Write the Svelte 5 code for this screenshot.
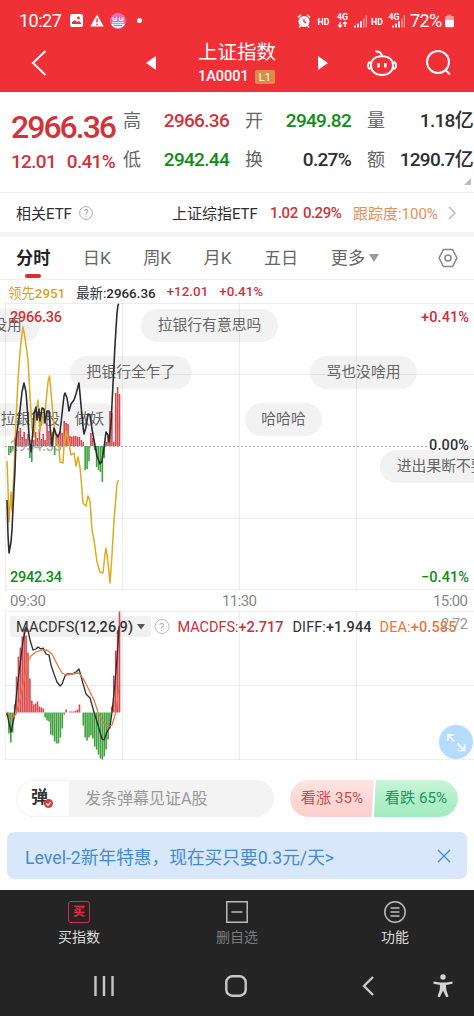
<script lang="ts">
	type Point = [number, number];

	const quotes = [
		{ label: '高', value: '2966.36', tone: 'up' },
		{ label: '开', value: '2949.82', tone: 'down' },
		{ label: '量', value: '1.18亿', tone: '' },
		{ label: '低', value: '2942.44', tone: 'down' },
		{ label: '换', value: '0.27%', tone: '' },
		{ label: '额', value: '1290.7亿', tone: '' }
	];

	const tabs = ['分时', '日K', '周K', '月K', '五日'];
	let activeTab = $state('分时');
	let showPromo = $state(true);

	// Floating comments behind the curves, x/y of the pill's corner inside the chart
	const comments = [
		{ text: '没用', x: -26, y: 6, w: 66 },
		{ text: '拉银行有意思吗', x: 141, y: 6, w: 137 },
		{ text: '把银行全乍了', x: 70, y: 53, w: 122 },
		{ text: '骂也没啥用', x: 310, y: 53, w: 107 },
		{ text: '拉銀行股　做妖', x: -16, y: 100, w: 137 },
		{ text: '哈哈哈', x: 245, y: 100, w: 77 },
		{ text: '进出果断不要犹豫', x: 380, y: 147, w: 152 }
	];

	const price: Point[] = [
		[7, 500], [8, 535], [9, 553], [11, 542], [12, 530], [13, 508], [15, 470], [16, 440], [18, 425],
		[20, 410], [22, 392], [24, 383], [26, 392], [28, 418], [29, 436], [31, 452], [33, 430], [34, 414],
		[36, 407], [37, 420], [39, 409], [40, 421], [42, 408], [44, 409], [45, 423], [47, 411], [49, 411],
		[50, 426], [52, 446], [54, 428], [56, 434], [58, 437], [60, 432], [62, 414], [64, 396], [65, 393],
		[67, 398], [69, 411], [71, 404], [74, 400], [76, 394], [79, 383], [81, 405], [83, 427], [84, 434],
		[86, 427], [88, 414], [90, 415], [92, 429], [94, 440], [97, 456], [100, 464], [102, 461], [104, 448],
		[106, 432], [108, 435], [109, 442], [111, 424], [113, 384], [115, 345], [117, 313], [118, 305], [119, 304]
	];
	const lead: Point[] = [
		[7, 461], [8, 488], [9, 522], [11, 492], [12, 511], [14, 470], [16, 420], [18, 380], [20, 352],
		[22, 333], [23, 327], [25, 338], [28, 360], [30, 396], [32, 428], [34, 437], [36, 412], [38, 400],
		[40, 431], [42, 413], [44, 423], [46, 402], [48, 382], [49.5, 376], [51, 392], [53, 415], [56, 442],
		[59, 447], [60, 462], [63, 463], [64, 445], [66, 431], [69, 444], [71, 455], [74, 453], [76, 466],
		[78, 457], [80, 467], [82, 490], [83, 503], [86, 506], [88, 496], [90, 501], [92, 530], [94, 540],
		[97, 562], [100, 572], [103, 573], [105, 554], [106, 548], [108, 562], [110, 583], [112, 555],
		[114, 520], [117, 484], [118, 481], [119, 481]
	];
	const diff: Point[] = [
		[7, 713], [9, 723], [11, 732], [14, 718], [17, 690], [20, 665], [23, 641], [26, 627], [28, 630],
		[30, 640], [33, 650], [36, 649], [38, 647], [41, 649], [43, 648], [46, 654], [49, 655], [51, 665],
		[54, 674], [57, 682], [60, 686], [62, 684], [65, 676], [67, 674], [72, 674], [76, 672], [79, 669],
		[82, 680], [86, 694], [90, 698], [94, 712], [98, 725], [102, 739], [104, 740], [107, 732],
		[110, 727], [112, 712], [115, 683], [118, 645], [119, 626]
	];
	const dea: Point[] = [
		[7, 712], [12, 718], [16, 714], [20, 700], [24, 680], [28, 661], [31, 656], [36, 652], [42, 650],
		[47, 650], [52, 654], [57, 664], [62, 673], [66, 675], [72, 674], [79, 673], [84, 680], [89, 690],
		[94, 700], [98, 712], [103, 722], [108, 727], [112, 725], [116, 712], [119, 685]
	];

	const force = [
		0, -9, -7, -3, 8, 10, 15, 18, 9, 14, 7, 12, -12, -16, 6, 14, 8, 17, 7, 12, 6, 23, 15, 8, 14, -9, 12, 9, 15, 13,
		25, 23, 22, 10, 9, 10, 10, 9, 9, 6, 4, -24, -23, -15, 13, 8, -4, -21, -24, -26, -36, -12, 4, 10, 35, 33, 4, 53, 59, 52
	];
	const macd = [
		-3, -21, -30, -20, 8, 36, 56, 65, 76, 84, 77, 60, 34, 12, 8, 9, 11, 6, 5, 4, -5, -8, -9, -22, -23, -29, -31, -31, -25, -16,
		-2, 3, 0, 1, 1, 1, 2, 3, 8, 0, -13, -25, -28, -25, -23, -26, -34, -37, -42, -46, -47, -44, -37, -27, -16, 6, 37, 62, 79, 101
	];

	const ZERO = 446;
	const MACD_ZERO = 712.5;
	const barX = (i: number) => 6.2 + i * 1.907;
	const line = (pts: Point[]) => pts.map((p) => p.join(',')).join(' ');
</script>

{#snippet bars(values: number[], zero: number)}
	{#each values as v, i (i)}
		<rect x={barX(i)} y={v > 0 ? zero - v : zero} width="1.6" height={Math.abs(v)} fill={v > 0 ? '#d9474d' : '#3fa33f'} />
	{/each}
{/snippet}

<div class="phone">
	<header>
		<div class="status">
			<span class="clock">10:27</span>
			<svg class="st-pic" viewBox="0 0 13 13"><rect width="13" height="13" rx="2" fill="#fff" /><path d="M2 10V8l3-2 2 2 2-1 2 2v1z" fill="#f03037" /><circle cx="8.5" cy="4" r="1.4" fill="#f03037" /></svg>
			<svg class="st-warn" viewBox="0 0 14 13"><path d="M7 .5 13.7 12.5H.3z" fill="#fff" /><path d="M7 4.5v4M7 9.7v1.6" stroke="#f03037" stroke-width="1.4" /></svg>
			<svg class="st-app" viewBox="0 0 16 16"><circle cx="8" cy="8" r="8" fill="#ef6bad" /><path d="M1 11h14a8 8 0 0 1-14 0z" fill="#fff" /><path d="M3 4v3.500h3.500V4M9.500 4v3.500H13V4M5 5v2M11.500 5v2M2 9.700h12" fill="none" stroke="#fff" stroke-width="1" /><path d="M4 12.5h8" stroke="#58a9dc" stroke-width="1.5" /></svg>
			<i class="st-dot"></i>
			<svg class="st-right" viewBox="0 0 112 16">
				<circle cx="7" cy="8.5" r="5.500" fill="#fff" />
				<path d="M7 5.5v3.400l2.200 1" fill="none" stroke="#f03037" stroke-width="1.200" />
				<path d="M1 4.500l3-2.700M13 4.500l-3-2.700M3.500 12.500 2 14.500M10.500 12.500 12 14.500" stroke="#fff" stroke-width="1.400" />
				<g class="st-label"><text x="20.500" y="11.500">HD</text><text x="74" y="11.500">HD</text><text x="40" y="7">4G</text><text x="91.500" y="7">4G</text></g>
				<path d="M43 9v5m-2-2 2 2 2-2M48 14V9m-2 2 2-2 2 2" fill="none" stroke="#fff" stroke-width="1.3" />
				<path d="M58 14.5v-2M61 14.5v-4M64 14.5V8M96 14.5v-2M99 14.5v-4M102 14.5V8" stroke="#fff" stroke-width="1.8" />
				<path d="M67 14.5v-9M69.300 14.5v-12M105 14.5v-9M107.300 14.5v-12" stroke="#fba3a6" stroke-width="1.200" />
			</svg>
			<span class="percent">72%</span>
			<svg class="battery" viewBox="0 0 10 14"><path d="M3 0h4v1.5h1.5Q10 1.5 10 3v2.5H0V3q0-1.500 1.500-1.500H3z" fill="#f99a9d" /><path d="M0 5.500h10v7q0 1.500-1.500 1.500h-7Q0 14 0 12.500z" fill="#fff" /></svg>
		</div>
		<div class="nav">
			<svg class="back" viewBox="0 0 16 26"><path d="M14.500 1 2 13l12.500 12" /></svg>
			<svg class="prev" viewBox="0 0 10 14"><path d="M10 0v14L0 7z" fill="#fff" /></svg>
			<div class="title">
				<h1>上证指数</h1>
				<p>1A0001 <b>L1</b></p>
			</div>
			<svg class="next" viewBox="0 0 10 14"><path d="M0 0v14l10-7z" fill="#fff" /></svg>
			<svg class="robot" viewBox="0 0 30 27"><path d="M8.500 1.500q5.500-.5 6.500 4.500M15 6.200c7 0 11 3.800 11 9.200s-4 9.600-11 9.600-11-4.200-11-9.600 4-9.200 11-9.200zM3.500 12Q1 12.500 1 15.500T3.500 19M26.500 12q2.500.5 2.500 3.500T26.500 19" /><path d="M11.600 13v4.500M18.400 13v4.500" stroke-width="2.500" /></svg>
			<svg class="search" viewBox="0 0 26 26"><circle cx="12" cy="12" r="11" /><path d="m19.500 20 4.500 4.500" /></svg>
		</div>
	</header>

	<section class="quote">
		<div class="last up">
			<strong>2966.36</strong>
			<p><span>12.01</span><span>0.41%</span></p>
		</div>
		<dl>
			{#each quotes as q (q.label)}
				<dt>{q.label}</dt>
				<dd class={q.tone}>{q.value}</dd>
			{/each}
		</dl>
		<i class="corner"></i>
	</section>

	<section class="etf">
		<span>相关ETF</span>
		<svg class="help" viewBox="0 0 14 14"><circle cx="7" cy="7" r="6.400" /><text x="7" y="10.500">?</text></svg>
		<span class="etf-name">上证综指ETF</span>
		<span class="etf-num up">1.02</span>
		<span class="etf-pct up">0.29%</span>
		<span class="track">跟踪度:100%</span>
		<svg class="more" viewBox="0 0 8 14"><path d="m1 1 6 6-6 6" /></svg>
	</section>

	<nav class="tabs">
		{#each tabs as tab (tab)}
			<button class:active={tab === activeTab} onclick={() => (activeTab = tab)}>{tab}</button>
		{/each}
		<button>更多 <i class="caret"></i></button>
		<svg class="gear" viewBox="0 0 20 20"><path d="M5.500 1.500h9L19 10l-4.500 8.500h-9L1 10z" /><circle cx="10" cy="10" r="3" /></svg>
	</nav>

	<div class="summary">
		<span class="gold">领先<b>2951</b></span>
		<span>最新:<b>2966.36</b></span>
		<b class="up">+12.01</b>
		<b class="up">+0.41%</b>
	</div>

	<section class="chart">
		{#each comments as c (c.text)}
			<span class="comment" style:left="{c.x}px" style:top="{c.y}px" style:width="{c.w}px">{c.text}</span>
		{/each}
		<svg class="plot" viewBox="0 303 474 457">
			<!-- Grid -->
			<g stroke="#000" stroke-opacity="0.070">
				{#each [303.5, 374.5, 518.5, 589.5, 611.5, 685.5, 759.5] as y (y)}
					<line x1="5" y1={y} x2="474" y2={y} />
				{/each}
				{#each [5.5, 122.5, 239.5, 356.5] as x (x)}
					<line x1={x} y1="303" x2={x} y2="590" />
					<line x1={x} y1="611" x2={x} y2="760" />
				{/each}
			</g>
			<line x1="5" y1="446.5" x2="428" y2="446.5" stroke="#aaa" stroke-dasharray="2 2" />
			<line x1="470" y1="446.5" x2="474" y2="446.5" stroke="#aaa" stroke-dasharray="2 2" />

			{@render bars(force, ZERO)}
			<text class="num" x="10" y="451" textLength="52" fill="#999" fill-opacity="0.800">2954.35</text>
			<polyline points={line(lead)} fill="none" stroke="#e0aa20" stroke-width="1.500" stroke-linejoin="round" />
			<polyline points={line(price)} fill="none" stroke="#2b2d31" stroke-width="1.600" stroke-linejoin="round" />

			<!-- Scale labels -->
			<text class="num" x="10" y="322" textLength="52" fill="#d0333b">2966.36</text>
			<text class="num" x="10" y="582" textLength="52" fill="#128c16">2942.34</text>
			<text class="num" x="421" y="322" textLength="48" fill="#c9323b">+0.41%</text>
			<text class="num" x="429" y="450" textLength="40" fill="#333">0.00%</text>
			<text class="num" x="421" y="582" textLength="48" fill="#128c16">−0.41%</text>
			<g class="time">
				<text x="10" y="606" textLength="36">09:30</text>
				<text x="222" y="606" textLength="35">11:30</text>
				<text x="433" y="606" textLength="35">15:00</text>
			</g>

			<!-- MACD pane -->
			<rect x="10" y="616" width="141" height="21" rx="2" fill="#f1f1f1" />
			{@render bars(macd, MACD_ZERO)}
			<polyline points={line(diff)} fill="none" stroke="#2b2d31" stroke-width="1.300" stroke-linejoin="round" />
			<polyline points={line(dea)} fill="none" stroke="#e8763a" stroke-width="1.300" stroke-linejoin="round" />
			<g class="ind">
				<text x="16" y="632" textLength="117" fill="#333">MACDFS<tspan class="b">(12,26,9)</tspan></text>
				<path d="M137 624h8l-4 5.500z" fill="#555" />
				<circle cx="162" cy="626.500" r="7" fill="none" stroke="#bbb" />
				<text x="159" y="631" class="q">?</text>
				<text x="177.500" y="632" textLength="106" fill="#c9323b">MACDFS:<tspan class="b">+2.717</tspan></text>
				<text x="292.500" y="632" textLength="79" fill="#333">DIFF:<tspan class="b">+1.944</tspan></text>
				<text x="379.500" y="632" textLength="77" fill="#e8763a">DEA:<tspan class="b">+0.585</tspan></text>
				<text x="441" y="629" textLength="27" fill="#999">2.72</text>
			</g>
		</svg>
		<svg class="expand" viewBox="0 0 34 34"><circle cx="17" cy="17" r="17" fill="#b5dcfa" /><path d="m15.500 16.500-6-6M9 16V10h6M18.500 18.500l6.500 6.500M19 25.500h6.500V19" fill="none" stroke="#fff" stroke-width="1.600" /></svg>
	</section>

	<section class="bullet">
		<div class="input">
			<div class="dan">弹<svg viewBox="0 0 10 10"><circle cx="5" cy="5" r="5" fill="#dc3b3b" /><path d="m2.500 5 2 2 3-3.500" fill="none" stroke="#fff" stroke-width="1.300" /></svg></div>
			<span>发条弹幕见证A股</span>
		</div>
		<div class="vote">
			<span class="bull">看涨 35%</span>
			<span class="bear">看跌 65%</span>
		</div>
	</section>

	{#if showPromo}
		<section class="promo">
			<span>Level-2新年特惠，现在买只要0.3元/天&gt;</span>
			<button aria-label="关闭" onclick={() => (showPromo = false)}>
				<svg viewBox="0 0 14 14"><path d="m1 1 12 12M13 1 1 13" /></svg>
			</button>
		</section>
	{/if}

	<footer>
		<div class="actions">
			<div>
				<span class="buy">买</span>
				买指数
			</div>
			<div class="dim">
				<svg viewBox="0 0 22 22"><path d="M.8.8h20.400v20.400H.8zM5.500 11h11" /></svg>
				删自选
			</div>
			<div>
				<svg viewBox="0 0 22 22"><circle cx="11" cy="11" r="10.200" /><path d="M6.500 7h9M6.500 11h9M6.500 15h9" /></svg>
				功能
			</div>
		</div>
		<div class="system">
			<svg class="recent" viewBox="0 0 20 20"><path d="M1.500 0v20M10 0v20M18.500 0v20" /></svg>
			<svg class="home" viewBox="0 0 22 22"><rect x="1.300" y="1.300" width="19.400" height="19.400" rx="6" /></svg>
			<svg class="sysback" viewBox="0 0 12 20"><path d="M11 1 2 10l9 9" /></svg>
			<svg class="a11y" viewBox="0 0 20 24"><circle cx="10" cy="3" r="2.700" /><path d="M.5 7.500 7 8.500h6l6.500-1v2.200L13 11l.3 5 2.200 6.500-2.300.8L10 16.500l-3.200 6.800-2.300-.8L6.700 16l.3-5L.5 9.700z" /></svg>
		</div>
	</footer>
</div>

<style>
	:global(body) { background: #fff; }
	.phone {
		width: 474px;
		height: 1016px;
		overflow: hidden;
		display: flex;
		flex-direction: column;
		font-family: Roboto, 'Noto Sans CJK SC', sans-serif;
		color: #2e2e30;
		white-space: nowrap;
	}
	.phone * { box-sizing: border-box; }
	h1, p, dl, dd { margin: 0; }
	svg { display: block; flex: none; }
	button { border: 0; background: none; padding: 0; font: inherit; color: inherit; }
	.up { color: #d0333b; }
	.down { color: #128c16; }

	header { height: 92px; background: #f03037; color: #fff; flex: none; }
	.status { display: flex; align-items: center; height: 41px; padding-left: 19px; }
	.clock { width: 51px; font-size: 18px; letter-spacing: -0.5px; line-height: 20px; }
	.st-pic { width: 13px; height: 13px; margin-right: 7px; }
	.st-warn { width: 14px; height: 13px; margin-right: 6px; }
	.st-app { width: 16px; height: 16px; }
	.st-dot { width: 5px; height: 5px; border-radius: 50%; background: #fff; margin: 0 0 0 11px; }
	.st-right { width: 112px; height: 16px; margin-left: 155px; }
	.st-label { font-size: 8.800px; font-weight: 700; fill: #fff; }
	.percent { width: 35px; margin-left: 1px; font-size: 18px; letter-spacing: -0.600px; line-height: 20px; }
	.battery { width: 9px; height: 14px; }

	.nav { display: flex; align-items: center; height: 44px; }
	.nav svg { fill: none; stroke: #fff; stroke-width: 2; }
	.back { width: 16px; height: 26px; margin-left: 31px; }
	.nav .prev, .nav .next { width: 10px; height: 14px; stroke: none; }
	.nav .prev { margin-left: 99px; }
	.nav .next { margin-left: 41px; }
	.title { width: 79px; margin-left: 42px; }
	h1 { font-size: 19.500px; font-weight: 400; line-height: 26px; }
	.title p { display: flex; align-items: center; font-size: 14.500px; font-weight: 500; line-height: 20px; margin-top: 1px; }
	.title b { margin-left: 6px; width: 20px; height: 14px; background: #dd8d43; border-radius: 2px; font-size: 11px; font-weight: 400; line-height: 15px; text-align: center; }
	.nav .robot { width: 30px; height: 27px; margin-left: 39px; }
	.search { width: 26px; height: 26px; margin-left: 29px; }

	.quote { position: relative; display: flex; height: 101px; padding-top: 10px; border-bottom: 1px solid #eee; flex: none; }
	.last { width: 123px; padding-left: 11px; }
	.last strong { display: block; font-size: 32px; font-weight: 500; letter-spacing: -2px; line-height: 50px; }
	.last p { display: flex; justify-content: space-between; width: 104px; font-size: 19px; font-weight: 500; letter-spacing: -0.700px; line-height: 20px; }
	dl { display: grid; grid-template-columns: 18px 88px 34px 88px 33px 89px; grid-template-rows: 37px 41px; align-items: center; width: 350px; }
	dt { font-size: 18px; color: #666; line-height: 28px; }
	dt:nth-of-type(3n + 2), dt:nth-of-type(3n) { padding-left: 16px; }
	dd { text-align: right; font-size: 19px; font-weight: 500; letter-spacing: -0.700px; line-height: 28px; }
	.corner { position: absolute; right: 3px; top: 86px; border: solid transparent; border-width: 0 0 7px 7px; border-bottom-color: #bbb; }

	.etf { display: flex; align-items: center; height: 39px; padding-left: 16px; font-size: 15px; flex: none; }
	.help { width: 14px; height: 14px; margin-left: 7px; fill: none; stroke: #aaa; }
	.help text { font-size: 10px; fill: #999; stroke: none; text-anchor: middle; }
	.etf-name { margin-left: 79px; width: 98px; }
	.etf-num, .etf-pct { font-weight: 500; letter-spacing: -0.500px; }
	.etf-num { width: 33px; }
	.etf-pct { width: 50px; }
	.track { width: 95px; color: #e6905c; }
	.more { width: 8px; height: 14px; fill: none; stroke: #bbb; stroke-width: 1.500; }

	.tabs { display: flex; align-items: center; height: 48px; border-top: 5px solid #f4f4f4; border-bottom: 1px solid #f0f0f0; padding: 0 16px 0 16px; color: #666; font-size: 17.200px; flex: none; }
	.tabs button { position: relative; height: 42px; margin-right: 32.400px; line-height: 42px; }
	.tabs .active { color: #222; font-weight: 700; }
	.tabs .active::after { content: ''; position: absolute; left: 9px; bottom: 1px; width: 16px; height: 4px; border-radius: 2px; background: #d92d35; }
	.caret { display: inline-block; border: solid transparent; border-width: 8px 5px 0; border-top-color: #999; vertical-align: 2px; }
	.tabs button:last-of-type { margin-right: 0; }
	.gear { width: 20px; height: 20px; margin-left: auto; fill: none; stroke: #888; stroke-width: 1.500; }

	.summary { display: flex; align-items: center; height: 23px; padding-left: 8px; gap: 11px; font-size: 13.400px; flex: none; }
	.summary b { font-weight: 500; }
	.gold { color: #d99f25; }

	.chart { position: relative; height: 457px; overflow: hidden; flex: none; }
	.plot { position: relative; width: 474px; height: 457px; }
	.num { font-size: 14.500px; font-weight: 500; }
	.time { font-size: 15px; fill: #888; }
	.ind { font-size: 14.500px; }
	.b { font-weight: 500; }
	.q { font-size: 11px; fill: #aaa; }
	.comment { position: absolute; height: 33px; border-radius: 17px; background: #f2f2f2; color: #666; font-size: 14.800px; line-height: 33px; text-align: center; }
	.expand { position: absolute; right: 1px; top: 422px; width: 34px; height: 34px; }

	.bullet { display: flex; align-items: center; gap: 16px; height: 72px; padding: 5px 16px 0; flex: none; }
	.input { display: flex; width: 259px; height: 37px; border-radius: 19px; background: #f3f3f3; border: 1px solid #f3f3f3; color: #999; font-size: 16px; line-height: 35px; overflow: hidden; }
	.dan { position: relative; width: 52px; margin-right: 16px; padding-left: 14px; background: #fff; color: #333; font-size: 17px; font-weight: 700; line-height: 33px; }
	.dan svg { position: absolute; left: 27px; top: 18px; width: 9px; height: 9px; }
	.vote { display: flex; width: 168px; height: 37px; font-size: 15.200px; line-height: 37px; text-align: center; }
	.bull { width: 84px; border-radius: 19px 0 0 19px; background: linear-gradient(#fde4e2, #fbcfcd); color: #d04a4a; clip-path: polygon(0 0, 100% 0, 97% 100%, 0 100%); }
	.bear { width: 84px; border-radius: 0 19px 19px 0; background: linear-gradient(#c7f5d9, #a0eabf); color: #189956; clip-path: polygon(2% 0, 100% 0, 100% 100%, 0 100%); }

	.promo { display: flex; align-items: center; justify-content: space-between; height: 47px; margin: 0 7px 11px; padding: 0 16px 0 18px; border-radius: 7px; background: #d9e7fa; color: #418cd0; font-size: 17.700px; flex: none; }
	.promo svg { width: 14px; height: 14px; fill: none; stroke: #418cd0; stroke-width: 1.300; }

	footer { flex: 1; background: #242424; }
	.actions { display: grid; grid-template-columns: repeat(3, 1fr); height: 66px; padding-top: 11px; }
	.actions div { display: flex; flex-direction: column; align-items: center; gap: 4px; color: #ddd; font-size: 14px; line-height: 20px; }
	.actions .dim { color: #777b80; }
	.actions svg { width: 22px; height: 22px; fill: none; stroke: #bbb; stroke-width: 1.500; }
	.buy { width: 22px; height: 22px; border: 1.500px solid #d22f49; border-radius: 3px; color: #ed2849; font-size: 12px; font-weight: 700; line-height: 20px; text-align: center; }
	.system { display: flex; align-items: center; height: 60px; padding-left: 94px; fill: none; stroke: #c8c8c8; stroke-width: 2.400; }
	.recent { width: 20px; height: 20px; }
	.home { width: 22px; height: 22px; margin-left: 111px; }
	.sysback { width: 12px; height: 20px; margin-left: 115px; }
	.a11y { width: 20px; height: 24px; margin-left: 59px; fill: #d5d5d5; stroke: none; }
</style>
